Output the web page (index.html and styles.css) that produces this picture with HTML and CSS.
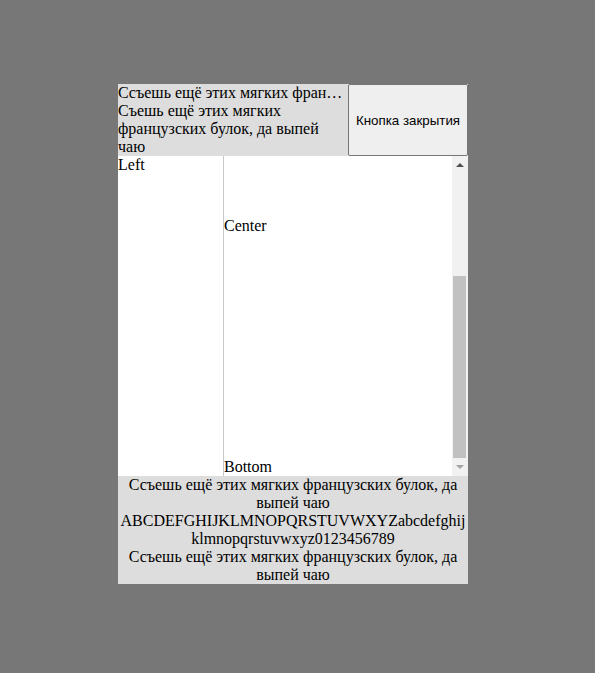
FILE: index.html
```html
<!DOCTYPE html>
<html>
<head>
<meta charset="utf-8">
<link rel="stylesheet" href="styles.css">
</head>
<body>
<div class="dialog">
  <div class="header">
    <div class="header-text">
      <div class="title">Ссъешь ещё этих мягких французских булок, да выпей чаю</div>
      <div class="subtitle">Съешь ещё этих мягких французских булок, да выпей чаю</div>
    </div>
    <button class="close">Кнопка закрытия</button>
  </div>
  <div class="main">
    <div class="left">Left</div>
    <div class="center">
      <div class="center-label">Center</div>
      <div class="bottom-label">Bottom</div>
    </div>
    <div class="scrollbar">
      <div class="arrow-box"><span class="arrow-up"></span></div>
      <div class="track"><div class="thumb"></div></div>
      <div class="arrow-box"><span class="arrow-down"></span></div>
    </div>
  </div>
  <div class="footer">
    <p>Ссъешь ещё этих мягких французских булок, да выпей чаю</p>
    <p>ABCDEFGHIJKLMNOPQRSTUVWXYZabcdefghijklmnopqrstuvwxyz0123456789</p>
    <p>Ссъешь ещё этих мягких французских булок, да выпей чаю</p>
  </div>
</div>
</body>
</html>
```

FILE: styles.css
```css
html, body {
  margin: 0;
  padding: 0;
}
body {
  background: #777777;
  height: 673px;
  padding: 84px 0 0 118px;
  box-sizing: border-box;
  font-family: "Liberation Serif", "Times New Roman", serif;
  font-size: 16px;
  line-height: 18px;
  color: #000;
}
.dialog {
  width: 350px;
  height: 500px;
  display: flex;
  flex-direction: column;
  background: #fff;
}
.header {
  display: flex;
  height: 72px;
  background: #dddddd;
}
.header-text {
  flex: 1;
  min-width: 0;
}
.title {
  white-space: nowrap;
  overflow: hidden;
  text-overflow: ellipsis;
}
.close {
  width: 120px;
  margin: 0;
  padding: 0;
  background: #efefef;
  border: 1px solid #767676;
  border-radius: 2px;
  font-family: "Liberation Sans", Arial, sans-serif;
  font-size: 13.33px;
  color: #000;
}
.main {
  flex: 1;
  display: flex;
  min-height: 0;
}
.left {
  width: 105px;
  border-right: 1px solid #c8c8c8;
}
.center {
  flex: 1;
  display: flex;
  flex-direction: column;
  justify-content: space-between;
  padding-top: 61px;
}
.scrollbar {
  width: 16px;
  background: #f1f1f1;
  display: flex;
  flex-direction: column;
}
.arrow-box {
  height: 18px;
  display: flex;
  align-items: center;
  justify-content: center;
}
.arrow-up {
  width: 0;
  height: 0;
  border-left: 4px solid transparent;
  border-right: 4px solid transparent;
  border-bottom: 4px solid #505050;
  margin-right: 1px;
}
.arrow-down {
  width: 0;
  height: 0;
  border-left: 4px solid transparent;
  border-right: 4px solid transparent;
  border-top: 4px solid #a3a3a3;
  margin-right: 1px;
}
.track {
  flex: 1;
  display: flex;
  flex-direction: column;
  justify-content: flex-end;
}
.thumb {
  height: 182px;
  margin: 0 2px 0 1px;
  background: #c1c1c1;
}
.footer {
  background: #dddddd;
  text-align: center;
  overflow-wrap: anywhere;
}
.footer p {
  margin: 0;
}
```
